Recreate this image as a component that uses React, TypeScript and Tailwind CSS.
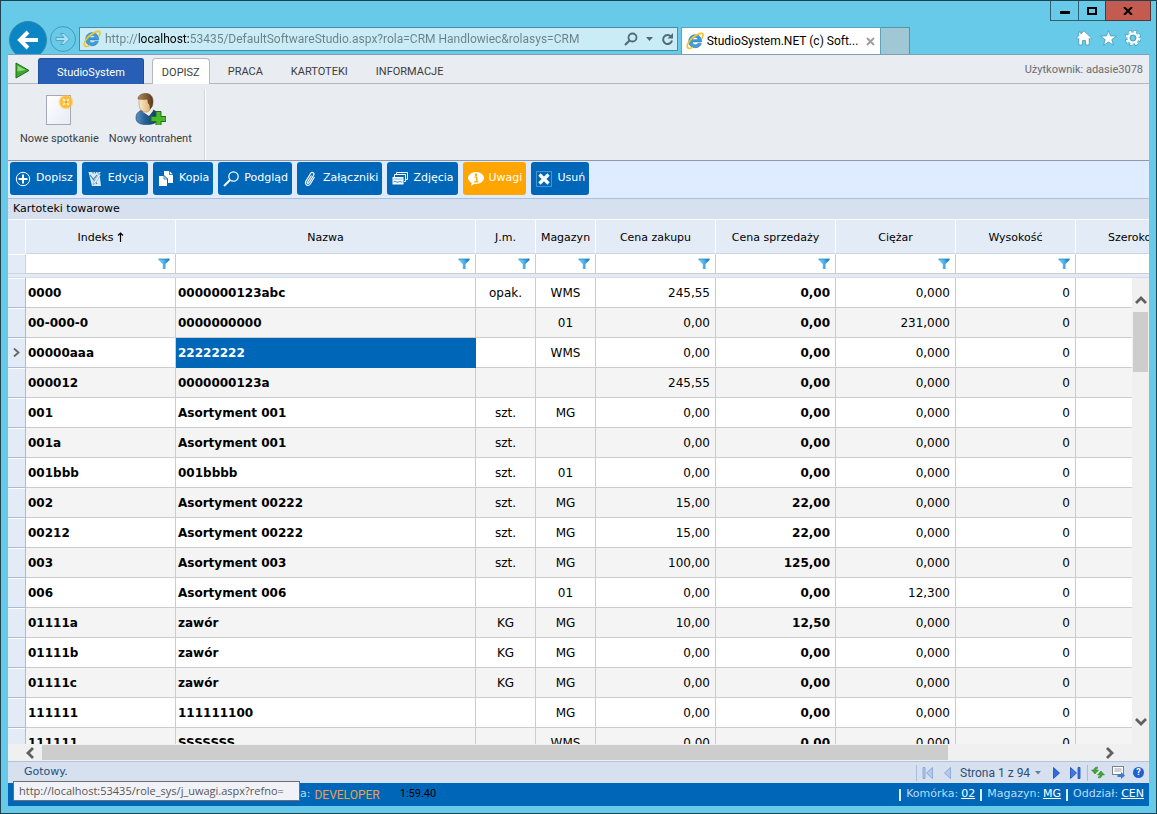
import type { ReactNode } from 'react';

type Align = 'left' | 'center' | 'right';

interface Column {
  key: string;
  title: string;
  width: string;
  align: Align;
  bold?: boolean;
  sorted?: boolean;
}

const columns: Column[] = [
  { key: 'indeks', title: 'Indeks', width: 'w-[150px]', align: 'left', bold: true, sorted: true },
  { key: 'nazwa', title: 'Nazwa', width: 'w-[300px]', align: 'left', bold: true },
  { key: 'jm', title: 'J.m.', width: 'w-[60px]', align: 'center' },
  { key: 'magazyn', title: 'Magazyn', width: 'w-[60px]', align: 'center' },
  { key: 'zakup', title: 'Cena zakupu', width: 'w-[120px]', align: 'right' },
  { key: 'sprzedaz', title: 'Cena sprzedaży', width: 'w-[120px]', align: 'right', bold: true },
  { key: 'ciezar', title: 'Ciężar', width: 'w-[120px]', align: 'right' },
  { key: 'wysokosc', title: 'Wysokość', width: 'w-[120px]', align: 'right' },
  { key: 'szerokosc', title: 'Szerokość', width: 'w-[120px]', align: 'right' },
];

const rows = [
  ['0000', '0000000123abc', 'opak.', 'WMS', '245,55', '0,00', '0,000', '0'],
  ['00-000-0', '0000000000', '', '01', '0,00', '0,00', '231,000', '0'],
  ['00000aaa', '22222222', '', 'WMS', '0,00', '0,00', '0,000', '0'],
  ['000012', '0000000123a', '', '', '245,55', '0,00', '0,000', '0'],
  ['001', 'Asortyment 001', 'szt.', 'MG', '0,00', '0,00', '0,000', '0'],
  ['001a', 'Asortyment 001', 'szt.', '', '0,00', '0,00', '0,000', '0'],
  ['001bbb', '001bbbb', 'szt.', '01', '0,00', '0,00', '0,000', '0'],
  ['002', 'Asortyment 00222', 'szt.', 'MG', '15,00', '22,00', '0,000', '0'],
  ['00212', 'Asortyment 00222', 'szt.', 'MG', '15,00', '22,00', '0,000', '0'],
  ['003', 'Asortyment 003', 'szt.', 'MG', '100,00', '125,00', '0,000', '0'],
  ['006', 'Asortyment 006', '', '01', '0,00', '0,00', '12,300', '0'],
  ['01111a', 'zawór', 'KG', 'MG', '10,00', '12,50', '0,000', '0'],
  ['01111b', 'zawór', 'KG', 'MG', '0,00', '0,00', '0,000', '0'],
  ['01111c', 'zawór', 'KG', 'MG', '0,00', '0,00', '0,000', '0'],
  ['111111', '111111100', '', 'MG', '0,00', '0,00', '0,000', '0'],
  ['111111', 'SSSSSSS', '', 'WMS', '0,00', '0,00', '0,000', '0'],
];

const FOCUSED_ROW = 2;

const alignClass: Record<Align, string> = {
  left: 'text-left pl-[2px]',
  center: 'text-center',
  right: 'text-right pr-[5px]',
};

/* ---------- icons ---------- */

function IeIcon() {
  return (
    <svg width="18" height="18" viewBox="0 0 18 18" className="shrink-0">
      <path
        d="M15.6 9.9H6.3c.1 1.9 1.3 2.900 3 2.900 1.300 0 2.200-.5 2.700-1.400h3.300c-.9 2.700-3.100 4.300-6.100 4.300-3.900 0-6.500-2.600-6.500-6.400C2.700 5.400 5.500 2.700 9.300 2.700c4 0 6.500 2.800 6.300 7.200ZM6.400 7.700h5.700c-.2-1.500-1.200-2.400-2.800-2.400-1.600 0-2.600.9-2.900 2.400Z"
        fill="#3f9fdc"
        stroke="#1f74b6"
        strokeWidth=".6"
      />
      <path
        d="M2.300 16.200C-.4 14.400 2.500 8.800 7.500 5 12 1.600 16.600.2 17 2.500c.2 1-.3 2.300-1 3.500"
        fill="none"
        stroke="#f0c52e"
        strokeWidth="1.700"
        strokeLinecap="round"
      />
      <path d="M2.300 16.200c1 .6 2.600.2 4.200-.8" fill="none" stroke="#f0c52e" strokeWidth="1.400" strokeLinecap="round" />
    </svg>
  );
}

function FunnelIcon() {
  return (
    <svg width="12" height="12" viewBox="0 0 12 12">
      <defs>
        <linearGradient id="funnel" x1="0" x2="1">
          <stop offset="0" stopColor="#7fd0f2" />
          <stop offset=".5" stopColor="#4db2e6" />
          <stop offset="1" stopColor="#0b6fae" />
        </linearGradient>
      </defs>
      <path d="M.5.800h11v1.200L7.500 6v5H4.800V6L.5 2Z" fill="url(#funnel)" />
      <path d="M.5 1.200h11" stroke="#2b8cc4" strokeWidth=".8" />
    </svg>
  );
}

function Chevron({ d }: { d: string }) {
  return (
    <svg width="12" height="12" viewBox="0 0 12 12">
      <path d={d} fill="none" stroke="#606060" strokeWidth="2.800" />
    </svg>
  );
}

function MeetingIcon() {
  return (
    <svg width="32" height="32" viewBox="0 0 32 32">
      <defs>
        <linearGradient id="sheet" x1="0" y1="0" x2="1" y2="1">
          <stop offset="0" stopColor="#fff" />
          <stop offset="1" stopColor="#e6ebf4" />
        </linearGradient>
        <radialGradient id="spark">
          <stop offset="0" stopColor="#ffdf6b" />
          <stop offset=".65" stopColor="#fdb52a" />
          <stop offset="1" stopColor="#fdc64a" stopOpacity="0" />
        </radialGradient>
      </defs>
      <rect x="3.500" y="2.500" width="24" height="29" fill="url(#sheet)" stroke="#a5a9b5" />
      <circle cx="23" cy="9" r="8" fill="url(#spark)" />
      <path d="m20 6 6 6m0-6-6 6" stroke="#fff8d8" strokeWidth="1.500" />
      <circle cx="23" cy="9" r="1.500" fill="#f79a1c" />
    </svg>
  );
}

function ContactIcon() {
  return (
    <svg width="32" height="32" viewBox="0 0 32 32">
      <defs>
        <linearGradient id="jacket" x1="0" x2="1">
          <stop offset="0" stopColor="#5b93c2" />
          <stop offset=".4" stopColor="#235f96" />
          <stop offset="1" stopColor="#0f3560" />
        </linearGradient>
        <linearGradient id="hair" x1="0" x2="1">
          <stop offset="0" stopColor="#b48a5c" />
          <stop offset="1" stopColor="#5a3819" />
        </linearGradient>
        <linearGradient id="face" x1="0" x2="1">
          <stop offset="0" stopColor="#fdebc8" />
          <stop offset="1" stopColor="#d9a66c" />
        </linearGradient>
      </defs>
      <path d="M2 25c0-4 2-7 7-8l6 5 4-5c4 1 6 5 6 9-3 5-9 6-15 5.500-5-.5-8-2.500-8-6.500Z" fill="url(#jacket)" stroke="#143a5f" strokeWidth=".6" />
      <path d="m9 16 9-2 1 4-4 5-6-4Z" fill="#f3efe2" />
      <path d="M5 6c0-2 3-4 7-4s7 4 6 8-1 6-3 8-6 1-8-1-2-6-2-11Z" fill="url(#face)" stroke="#a57845" strokeWidth=".5" />
      <path d="M4 6C4 2 8 .5 12 .5S19 3 19 8s-1 6-3 8c0-3 0-5-2-6 0-2 0-3-1-4-3 1-6 0-9 0Z" fill="url(#hair)" stroke="#60401f" strokeWidth=".5" />
      <path d="M22 18.500h5v5h5v5h-5v4h-5v-4h-5v-5h5Z" fill="#4cb82e" stroke="#1d7412" />
    </svg>
  );
}

/* ---------- browser frame ---------- */

function BrowserBar() {
  return (
    <header className="shrink-0">
      <div className="flex h-[20px] justify-end pr-[5px]">
        <button aria-label="Minimalizuj" className="flex w-[29px] items-center justify-center border border-t-0 border-[#2f6173]">
          <span className="mt-1 h-[3px] w-[10px] bg-black" />
        </button>
        <button aria-label="Maksymalizuj" className="flex w-[26px] items-center justify-center border-b border-[#2f6173]">
          <span className="h-[8px] w-[10px] border-2 border-black" />
        </button>
        <button aria-label="Zamknij" className="flex w-[46px] items-center justify-center border border-t-0 border-[#5c3434] bg-[#c35b50]">
          <svg width="10" height="8" viewBox="0 0 10 8">
            <path d="m1 0 8 8m0-8-8 8" stroke="#000" strokeWidth="2" />
          </svg>
        </button>
      </div>

      <div className="flex h-[33px] items-start overflow-hidden pl-2 pr-[15px]">
        <button aria-label="Wstecz" className="flex size-[38px] shrink-0 items-center justify-center rounded-full border border-[#3b84a4] bg-[#0b86c5]">
          <svg width="24" height="20" viewBox="0 0 24 20">
            <path d="M22 10H4m8-8-8 8 8 8" fill="none" stroke="#fff" strokeWidth="4" />
          </svg>
        </button>
        <button aria-label="Dalej" className="ml-[3px] mt-[5px] flex size-[26px] shrink-0 items-center justify-center rounded-full border border-[#4a98b6]">
          <svg width="16" height="14" viewBox="0 0 16 14">
            <path d="M1 5.500h8L5.500 1.500h3.500L14.500 7 9 12.500H5.500L9 8.500H1Z" fill="#a9e0f3" stroke="#4597b5" strokeWidth=".8" />
          </svg>
        </button>
        <div className="ml-[3px] mt-[6px] flex h-[24px] min-w-0 flex-[598] items-center gap-1 border border-[#4a8ba3] bg-[#c9ecf6] px-[3px]">
          <IeIcon />
          <input
            aria-label="Adres"
            readOnly
            value="http://localhost:53435/DefaultSoftwareStudio.aspx?rola=CRM Handlowiec&rolasys=CRM"
            className="min-w-0 flex-1 bg-[linear-gradient(90deg,#6b7f86_34px,#000_34px,#000_84px,#6b7f86_84px)] bg-clip-text font-[Roboto,sans-serif] text-xs text-transparent outline-none"
          />
          <button aria-label="Szukaj">
            <svg width="14" height="14" viewBox="0 0 14 14">
              <circle cx="8.500" cy="5.500" r="4" fill="none" stroke="#4f6b75" strokeWidth="1.800" />
              <path d="m5.500 8.500-4.500 4.500" stroke="#4f6b75" strokeWidth="2.200" />
            </svg>
          </button>
          <button aria-label="Historia adresów" className="px-1">
            <svg width="7" height="4" viewBox="0 0 7 4">
              <path d="M0 0h7L3.500 4Z" fill="#4f6b75" />
            </svg>
          </button>
          <button aria-label="Odśwież">
            <svg width="13" height="13" viewBox="0 0 13 13">
              <path d="M10 3.500A4.500 4.500 0 1 0 11 7.500" fill="none" stroke="#4f6b75" strokeWidth="2" />
              <path d="M12 0v5.500H6.500Z" fill="#4f6b75" />
            </svg>
          </button>
        </div>
        <div className="ml-[3px] mt-[6px] flex h-[27px] flex-[466] items-start">
          <div className="flex h-[27px] w-[200px] items-center border border-b-0 border-[#5fa2b9] bg-white pl-1 pr-[5px]">
            <IeIcon />
            <span className="ml-[3px] flex-1 truncate font-[Roboto,sans-serif] text-xs">StudioSystem.NET (c) Soft...</span>
            <button aria-label="Zamknij kartę">
              <svg width="9" height="9" viewBox="0 0 9 9">
                <path d="m1 1 7 7m0-7-7 7" stroke="#a0a0a0" strokeWidth="2" />
              </svg>
            </button>
          </div>
          <button aria-label="Nowa karta" className="h-[27px] w-[29px] border border-b-0 border-l-0 border-[#5794a8] bg-[#a0c8d4]" />
          <div className="ml-auto flex gap-2 pt-[3px]">
            <button aria-label="Strona główna">
              <svg width="16" height="16" viewBox="0 0 16 16">
                <path d="M8 .8 15.400 8l-1.300 1.300-.9-.8V15H9.500v-4.500h-3V15H2.800V8.500l-.9.800L.6 8l2.200-2.200V2h2v1.900Z" fill="#fff" stroke="#3f8cab" strokeWidth=".7" />
              </svg>
            </button>
            <button aria-label="Ulubione">
              <svg width="17" height="16" viewBox="0 0 17 16">
                <path d="m8.500.6 2 5.300 5.900.2-4.600 3.500 1.600 5.600-4.900-3.300-4.900 3.300 1.600-5.600L.6 6.100l5.900-.2Z" fill="#fff" stroke="#3f8cab" strokeWidth=".7" />
              </svg>
            </button>
            <button aria-label="Narzędzia">
              <svg width="16" height="16" viewBox="0 0 16 16">
                <circle cx="8" cy="8" r="6.500" fill="none" stroke="#3f8cab" strokeWidth="3.400" strokeDasharray="3.200 1.900" />
                <circle cx="8" cy="8" r="6.300" fill="none" stroke="#fff" strokeWidth="2.600" strokeDasharray="2.600 2.350" />
                <circle cx="8" cy="8" r="4.400" fill="none" stroke="#fff" strokeWidth="2.200" />
                <circle cx="8" cy="8" r="2.900" fill="none" stroke="#3f8cab" strokeWidth=".7" />
              </svg>
            </button>
          </div>
        </div>
      </div>
    </header>
  );
}

/* ---------- ribbon ---------- */

function Ribbon() {
  return (
    <section className="shrink-0 border-b border-[#8f98a8] bg-[#e9edf2] font-[Roboto,sans-serif] text-[11px] text-[#3c3c3c]">
      <div className="flex h-[29px] items-end gap-2 border-b border-[#b3b8c1] pl-[7px] pr-[6px]">
        <button aria-label="Start" className="mb-[4px]">
          <svg width="15" height="17" viewBox="0 0 15 17">
            <path d="M1 1 14 8.500 1 16Z" fill="#3fa535" stroke="#1f6f1a" />
            <path d="m2.500 3.500 8 4.600-8 1.500Z" fill="#8fdc75" />
          </svg>
        </button>
        <nav className="-mb-px flex items-end gap-2">
          <button className="h-[26px] rounded-t-[3px] border border-b-0 border-[#1f4f9c] bg-[#265fb5] px-[18px] pt-[3px] text-white">StudioSystem</button>
          <button className="h-[26px] rounded-t-[4px] border border-b-0 border-[#b3b8c1] bg-white px-[9px] pt-[3px]">DOPISZ</button>
          <button className="h-[26px] px-[10px] pt-[3px]">PRACA</button>
          <button className="h-[26px] px-[10px] pt-[3px]">KARTOTEKI</button>
          <button className="h-[26px] px-[10px] pt-[3px]">INFORMACJE</button>
        </nav>
        <span className="mb-[5px] ml-auto text-[#6b6b6b]">Użytkownik: adasie3078</span>
      </div>
      <div className="flex h-[76px]">
        <div className="mt-[5px] flex items-start gap-[10px] border-r border-[#d3d7de] pl-3 pr-[12px] shadow-[1px_0_0_#fff]">
          <RibbonItem icon={<MeetingIcon />} label="Nowe spotkanie" />
          <RibbonItem icon={<ContactIcon />} label="Nowy kontrahent" />
        </div>
      </div>
    </section>
  );
}

function RibbonItem({ icon, label }: { icon: ReactNode; label: string }) {
  return (
    <button className="flex flex-col items-center gap-[6px] pt-1">
      {icon}
      <span>{label}</span>
    </button>
  );
}

/* ---------- grid toolbar ---------- */

const tools: { label: string; active?: boolean; icon: ReactNode }[] = [
  {
    label: 'Dopisz',
    icon: (
      <>
        <circle cx="8" cy="8" r="6.700" fill="none" stroke="#fff" />
        <path d="M8 3.500v9M3.500 8h9" stroke="#fff" strokeWidth="2" />
      </>
    ),
  },
  {
    label: 'Edycja',
    icon: (
      <>
        <path d="M1.500 1H14l-1.500 1.500L14 15H5Z" fill="#dcebf7" />
        <path d="M6 1v1.500M8.500 1v1.500M11 1v1.500M3 4l7 9M6 9l4-5" stroke="#3b7fb6" strokeWidth="1.200" />
        <path d="M6.500 11.500 12 3l1.500 1L8 12.500l-2 1Z" fill="#fff" stroke="#5c97c6" strokeWidth=".6" />
      </>
    ),
  },
  {
    label: 'Kopia',
    icon: (
      <>
        <path d="M6 0h5.500L15 3.500V12H6Z" fill="#fff" />
        <path d="M.5 4.500H6l3.500 3.500v7.500h-9Z" fill="#fff" stroke="#0067b8" />
        <path d="M6 4.500V8h3.500M11.500 0v3.500H15" fill="none" stroke="#0067b8" strokeWidth=".8" />
      </>
    ),
  },
  {
    label: 'Podgląd',
    icon: (
      <>
        <circle cx="10.500" cy="5.500" r="4.700" fill="none" stroke="#fff" strokeWidth="1.200" />
        <path d="M7 9 1 15" stroke="#fff" strokeWidth="2" />
      </>
    ),
  },
  {
    label: 'Załączniki',
    icon: (
      <path
        d="M9.500 4.500 5.500 11c-.6 1.200.9 2 1.600.8L11.500 4.500C13 2 10 .2 8.500 2.500L4 10c-1.800 3.500 2 6 4.300 3L12.500 6"
        fill="none"
        stroke="#fff"
        strokeWidth="1.200"
      />
    ),
  },
  {
    label: 'Zdjęcia',
    icon: (
      <>
        <path d="M4.500 4V1.500h11v7H14M2.500 6V3.500h11v7H12" fill="none" stroke="#fff" />
        <path d="M.5 6h11v7.500H.5Z" fill="#fff" />
        <path d="M1.500 11c2-1.500 3 1 5 0s3 .5 4 0" fill="none" stroke="#0067b8" strokeWidth=".8" />
        <path d="M1.500 8h9" stroke="#7fb2da" />
      </>
    ),
  },
  {
    label: 'Uwagi',
    active: true,
    icon: (
      <>
        <ellipse cx="8" cy="7" rx="8" ry="6" fill="#fff" />
        <path d="m4 11-1 4 5-3Z" fill="#fff" />
        <circle cx="8" cy="3.800" r="1.200" fill="#ffa500" />
        <path d="M6.500 6.200h2.200v4.300M6.200 10.800h4" fill="none" stroke="#ffa500" strokeWidth="1.300" />
      </>
    ),
  },
  {
    label: 'Usuń',
    icon: (
      <>
        <rect x=".5" y=".5" width="15" height="15" fill="none" stroke="#8fc0e6" strokeDasharray="1 1" />
        <path d="m3.500 3.500 9 9m0-9-9 9" stroke="#fff" strokeWidth="3.200" />
      </>
    ),
  },
];

function Toolbar() {
  return (
    <div className="flex shrink-0 gap-[5px] border-b border-[#a9c1e0] bg-[#dfecff] px-[2px] pb-[3px] pt-px text-[11px] text-white">
      {tools.map((t) => (
        <button
          key={t.label}
          className={`flex h-[33px] items-center gap-[5px] rounded-[3px] pl-[5px] pr-[4px] ${t.active ? 'bg-[#ffa500]' : 'bg-[#0067b8]'}`}
        >
          <svg width="16" height="16" viewBox="0 0 16 16">
            {t.icon}
          </svg>
          <span className="pb-px">{t.label}</span>
        </button>
      ))}
    </div>
  );
}

/* ---------- data grid ---------- */

function Cols() {
  return (
    <colgroup>
      <col className="w-[18px]" />
      {columns.map((c) => (
        <col key={c.key} className={c.width} />
      ))}
    </colgroup>
  );
}

function DataGrid() {
  return (
    <main className="flex min-h-0 flex-1 flex-col">
      <h1 className="shrink-0 bg-[#d6e0ee] px-[5px] py-[2px] text-[11px] leading-[16px]">Kartoteki towarowe</h1>

      <div className="shrink-0 overflow-hidden border-b border-[#d3daea] bg-[#e3ebf7] pb-[3px]">
        <table className="w-[1188px] table-fixed border-separate border-spacing-0 text-[11px]">
          <Cols />
          <thead>
            <tr className="h-[35px] bg-[#e3ebf6]">
              <th className="border-r border-t border-[#f8faff]" />
              {columns.map((c) => (
                <th key={c.key} scope="col" className="border-b border-r border-t border-b-[#ccd6e8] border-r-[#fff] border-t-white p-0 pt-[3px] font-normal">
                  {c.title}
                  {c.sorted && (
                    <svg width="7" height="10" viewBox="0 0 7 10" className="mb-[2px] ml-[3px] inline">
                      <path d="M3.500 10V1M1 3.500 3.500 1 6 3.500" fill="none" stroke="#000" strokeWidth="1.200" />
                    </svg>
                  )}
                </th>
              ))}
            </tr>
            <tr className="h-[20px]">
              <td className="border-b border-r border-t border-b-[#ccd6e8] border-r-[#c5d2e8] border-t-white bg-[#e3ebf6] p-0" />
              {columns.map((c) => (
                <td key={c.key} className="border-b border-r border-[#cccccc] bg-white p-0">
                  <div className="flex items-center pr-[5px]">
                    <input aria-label={`Filtr: ${c.title}`} className="h-[19px] min-w-0 flex-1 px-1 outline-none" />
                    <button aria-label={`Warunek filtra: ${c.title}`}>
                      <FunnelIcon />
                    </button>
                  </div>
                </td>
              ))}
            </tr>
          </thead>
        </table>
      </div>

      <div className="flex min-h-0 flex-1">
        <div className="min-w-0 flex-1 overflow-hidden">
          <table className="w-[1188px] table-fixed border-separate border-spacing-0 text-xs">
            <Cols />
            <tbody>
              {rows.map((row, r) => (
                <tr key={r} className={`h-[30px] ${r % 2 ? 'bg-[#f4f4f4]' : 'bg-white'}`}>
                  <td className="border-b border-r border-[#a9bcd9] bg-[#e3ebf6] p-0 shadow-[inset_0_1px_0_#fff]">
                    {r === FOCUSED_ROW && (
                      <svg width="7" height="9" viewBox="0 0 7 9" className="mx-auto">
                        <path d="m1 .5 4.500 4-4.500 4" fill="none" stroke="#666" strokeWidth="1.800" />
                      </svg>
                    )}
                  </td>
                  {columns.map((c, i) => {
                    const focused = r === FOCUSED_ROW && i === 1;
                    return (
                      <td
                        key={c.key}
                        className={`border-b border-r py-0 ${alignClass[c.align]} ${c.bold ? 'font-bold' : ''} ${
                          focused ? 'border-[#0067b8] bg-[#0067b8] text-white' : 'border-[#cccccc]'
                        }`}
                      >
                        {row[i]}
                      </td>
                    );
                  })}
                </tr>
              ))}
            </tbody>
          </table>
        </div>
        <div className="flex w-[17px] shrink-0 flex-col items-center bg-[#f0f0f0] pb-4 pt-4">
          <button aria-label="W górę">
            <Chevron d="M1 9 6 4l5 5" />
          </button>
          <div className="mt-[6px] h-[60px] w-[15px] bg-[#cdcdcd]" />
          <button aria-label="W dół" className="mt-auto">
            <Chevron d="m1 3 5 5 5-5" />
          </button>
        </div>
      </div>

      <div className="flex h-[17px] shrink-0 items-center bg-[#f0f0f0] pl-4 pr-[33px]">
        <button aria-label="W lewo" className="mr-[6px]">
          <Chevron d="M9 1 4 6l5 5" />
        </button>
        <div className="h-[15px] w-[83%] bg-[#cdcdcd]" />
        <button aria-label="W prawo" className="ml-auto">
          <Chevron d="m3 1 5 5-5 5" />
        </button>
      </div>
    </main>
  );
}

function Pager() {
  return (
    <div className="flex items-center">
      <span className="mr-[5px] h-[16px] w-px bg-[#a9bcd9]" />
      <button aria-label="Pierwsza strona">
        <svg width="11" height="12" viewBox="0 0 11 12">
          <path d="M1 .5h2v11H1ZM10.500.5v11L4.500 6Z" fill="#b4c9ee" stroke="#7f9fd6" strokeWidth=".8" />
        </svg>
      </button>
      <button aria-label="Poprzednia strona" className="ml-[11px] mr-[5px]">
        <svg width="7" height="12" viewBox="0 0 7 12">
          <path d="M6.500.5v11L.5 6Z" fill="#b4c9ee" stroke="#7f9fd6" strokeWidth=".8" />
        </svg>
      </button>
      <select aria-label="Strona" className="w-[79px] appearance-none bg-transparent pl-1 text-[#2c4f7a] outline-none">
        <option>Strona 1 z 94</option>
        <option>Strona 2 z 94</option>
      </select>
      <svg width="6" height="4" viewBox="0 0 6 4">
        <path d="M0 0h6L3 3.500Z" fill="#5f7fa8" />
      </svg>
      <button aria-label="Następna strona" className="ml-3">
        <svg width="7" height="12" viewBox="0 0 7 12">
          <path d="M.5.5v11L6.500 6Z" fill="#2f6be0" stroke="#1c49ad" strokeWidth=".8" />
        </svg>
      </button>
      <button aria-label="Ostatnia strona" className="ml-[10px]">
        <svg width="11" height="12" viewBox="0 0 11 12">
          <path d="M8 .5h2v11H8ZM.5.5v11L6.500 6Z" fill="#3f78e6" stroke="#1c49ad" strokeWidth=".8" />
        </svg>
      </button>
      <span className="ml-[6px] mr-[3px] h-[16px] w-px bg-[#a9bcd9]" />
      <button aria-label="Odśwież dane">
        <svg width="14" height="13" viewBox="0 0 14 13">
          <path d="M6.500 1C4.500 1 3 2 3 4H.5L4 8l3.500-4H5c0-1 .5-1.500 1.500-1.500Z" fill="#3fa535" stroke="#2d8526" strokeWidth=".5" />
          <path d="M7.500 12c2 0 3.500-1 3.500-3h2.500L10 5 6.500 9H9c0 1-.5 1.500-1.500 1.500Z" fill="#3fa535" stroke="#2d8526" strokeWidth=".5" />
        </svg>
      </button>
      <button aria-label="Eksport" className="ml-[7px]">
        <svg width="13" height="13" viewBox="0 0 13 13">
          <rect x=".5" y=".5" width="11" height="8" fill="#fff" stroke="#7b7f86" />
          <path d="M2.500 3h7M2.500 5h7" stroke="#9aa0a8" />
          <path d="M5.500 8H9V6l4 3.500L9 13v-2H5.500Z" fill="#3f78d8" />
        </svg>
      </button>
      <button aria-label="Pomoc" className="ml-2 flex size-[11px] items-center justify-center rounded-full bg-[#1f5fd0] text-[9px] font-bold leading-none text-white">
        ?
      </button>
    </div>
  );
}

function Footer() {
  return (
    <footer className="relative shrink-0">
      <div className="flex h-[22px] items-center border-t border-[#b0c2dc] bg-[#d6e0ee] pl-4 pr-[5px] text-[11px] text-[#24507c]">
        <span>Gotowy.</span>
        <div className="ml-auto font-[Roboto,sans-serif] text-xs">
          <Pager />
        </div>
      </div>
      <div className="flex h-[23px] items-center bg-[#0067b8] pl-[292px] pr-[5px] text-[11px] text-[#b9dcf5]">
        <span>a:</span>
        <span className="ml-1 font-[Roboto,sans-serif] text-xs text-[#e8a04a]">DEVELOPER</span>
        <span className="ml-[20px] font-[Roboto,sans-serif] text-[11px] text-black">1:59.40</span>
        <div className="ml-auto flex items-center gap-[5px]">
          <Place label="Komórka:" value="02" />
          <Place label="Magazyn:" value="MG" />
          <Place label="Oddział:" value="CEN" />
        </div>
      </div>
      <div className="absolute bottom-[5px] left-[5px] min-w-[287px] border border-[#6f6f6f] bg-[#f1f2f7] px-[5px] font-['Open_Sans',sans-serif] text-[11px] leading-[18px] text-[#575757]">
        http://localhost:53435/role_sys/j_uwagi.aspx?refno=
      </div>
    </footer>
  );
}

function Place({ label, value }: { label: string; value: string }) {
  return (
    <span className="flex items-center gap-[3px]">
      <span className="mr-[2px] h-[12px] w-[2px] bg-[#d6ecfb]" />
      {label}
      <a href="#" className="text-white underline">
        {value}
      </a>
    </span>
  );
}

export default function App() {
  return (
    <div className="flex h-screen flex-col overflow-hidden border border-[#1d4250] bg-[#66cae8] pb-[7px] font-['DejaVu_Sans',Verdana,sans-serif] text-black">
      <BrowserBar />
      <div className="mx-[7px] flex min-h-0 flex-1 flex-col border-t border-[#7d9fb8] bg-white">
        <Ribbon />
        <Toolbar />
        <DataGrid />
        <Footer />
      </div>
    </div>
  );
}
